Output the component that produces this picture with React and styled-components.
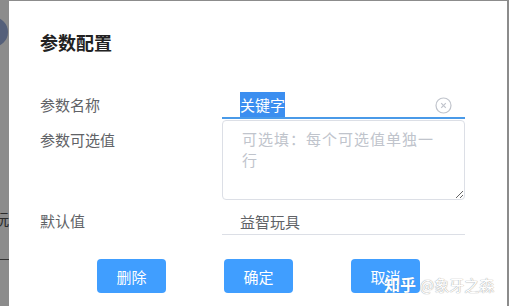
import React from "react";
import styled, { createGlobalStyle } from "styled-components";

const Global = createGlobalStyle`
  html, body { margin: 0; padding: 0; background: #8c8c8c; }
  body { font-family: "Noto Sans CJK SC", "Noto Sans", sans-serif; }
  * { box-sizing: border-box; }
`;

const Page = styled.div`
  display: flex;
  width: 509px;
  height: 306px;
  overflow: hidden;
  background: #8c8c8c;
  position: relative;
`;

const Backdrop = styled.div`
  width: 9px;
  flex: none;
  display: flex;
  flex-direction: column;
  overflow: hidden;
  background: #8c8c8c;
`;

const Avatar = styled.div`
  width: 30px;
  height: 30px;
  border-radius: 50%;
  background: #55607a;
  margin: 17px 0 0 -22px;
  flex: none;
`;

const BackText = styled.div`
  margin: 162px 0 0 -6px;
  font-size: 15px;
  color: #2a2a2a;
  white-space: nowrap;
  line-height: 20px;
`;

const BackLine = styled.div`
  height: 1px;
  width: 9px;
  background: #333;
  margin-top: 30px;
`;

const Modal = styled.div`
  flex: 1;
  margin-top: 1px;
  background: #fff;
  padding: 29px 0 0 31px;
  display: flex;
  flex-direction: column;
`;

const RightStrip = styled.div`
  width: 2px;
  flex: none;
  background: #8c8c8c;
`;

const Title = styled.h2`
  margin: 0 0 38px;
  font-size: 18px;
  font-weight: 700;
  line-height: 24px;
  color: #222;
`;

const Row = styled.div`
  display: flex;
  align-items: flex-start;
  margin-top: ${(p) => p.$mt || 0}px;
`;

const Label = styled.div`
  width: 182px;
  flex: none;
  font-size: 15px;
  line-height: 21px;
  color: #606266;
  padding-top: ${(p) => p.$pt || 0}px;
`;

const Field = styled.div`
  width: 243px;
  height: ${(p) => p.$h}px;
  display: flex;
  align-items: center;
  padding-left: 18px;
  padding-right: 13px;
  border-bottom: ${(p) => (p.$active ? "2px solid #4a9ae8" : "1.5px solid #dcdfe6")};
  font-size: 15px;
  color: #606266;
`;

const Selected = styled.span`
  background: #3b8ef0;
  color: #fff;
  line-height: 25px;
  height: 25px;
  display: inline-block;
`;

const Spacer = styled.div`
  flex: 1;
`;

const ClearIcon = styled.svg`
  width: 17px;
  height: 17px;
  margin-top: 1px;
`;

const TextArea = styled.textarea`
  width: 243px;
  height: 80px;
  border: 1px solid #dcdfe6;
  border-radius: 4px;
  padding: 7px 20px 0 19px;
  font-family: "Noto Sans CJK SC", "Noto Sans", sans-serif;
  font-size: 15px;
  line-height: 21px;
  letter-spacing: 1px;
  color: #606266;
  outline: none;
  resize: vertical;
  &::placeholder {
    color: #c0c4cc;
  }
`;

const Buttons = styled.div`
  display: flex;
  gap: 58px;
  margin: 24px 0 0 57px;
`;

const Button = styled.button`
  width: 69px;
  height: 34px;
  border: none;
  border-radius: 4px;
  background: #409eff;
  color: #fff;
  font-family: "Noto Sans CJK SC", "Noto Sans", sans-serif;
  font-size: 15px;
  padding: 0;
`;

const Watermark = styled.div`
  position: absolute;
  left: 384px;
  top: 272px;
  display: flex;
  align-items: baseline;
  gap: 4px;
  color: #fff;
  white-space: nowrap;
  pointer-events: none;
`;

const WmBrand = styled.span`
  font-size: 16px;
  font-weight: 700;
  text-shadow: 0 0 1px rgba(0, 0, 0, 0.25);
`;

const WmUser = styled.span`
  font-size: 15px;
  text-shadow: 0 0 1px #a8a8a8, 0 0 1px #a8a8a8;
`;

export default function App() {
  return (
    <>
      <Global />
      <Page>
        <Backdrop>
          <Avatar />
          <BackText>玩</BackText>
          <BackLine />
        </Backdrop>
        <Modal>
          <Title>参数配置</Title>
          <Row>
            <Label $pt={2}>参数名称</Label>
            <Field $h={27} $active>
              <Selected>关键字</Selected>
              <Spacer />
              <ClearIcon viewBox="0 0 17 17">
                <circle cx="8.5" cy="8.5" r="7.5" fill="none" stroke="#c0c4cc" strokeWidth="1.2" />
                <path d="M6.2 6.2 L10.8 10.8 M10.8 6.2 L6.2 10.8" stroke="#c0c4cc" strokeWidth="1.2" />
              </ClearIcon>
            </Field>
          </Row>
          <Row $mt={1}>
            <Label $pt={9}>参数可选值</Label>
            <TextArea placeholder="可选填：每个可选值单独一行" />
          </Row>
          <Row $mt={8}>
            <Label $pt={2}>默认值</Label>
            <Field $h={27}>益智玩具</Field>
          </Row>
          <Buttons>
            <Button>删除</Button>
            <Button>确定</Button>
            <Button>取消</Button>
          </Buttons>
        </Modal>
        <RightStrip />
        <Watermark>
          <WmBrand>知乎</WmBrand>
          <WmUser>@象牙之森</WmUser>
        </Watermark>
      </Page>
    </>
  );
}
